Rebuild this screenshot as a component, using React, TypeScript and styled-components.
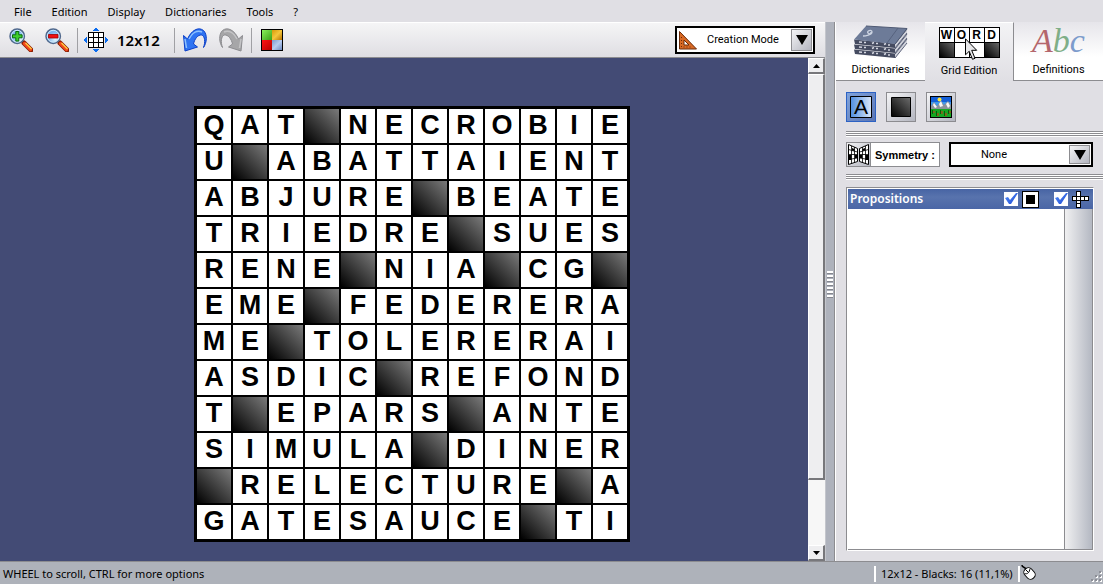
import React from 'react';
import styled, { createGlobalStyle, css } from 'styled-components';

const GlobalStyle = createGlobalStyle`
  * { box-sizing: border-box; }
  body { margin: 0; }
  button, select, input { font: inherit; color: inherit; margin: 0; }
`;

const uiFont = '"Noto Sans", "Open Sans", sans-serif';
const panelFont = 'Roboto, "Liberation Sans", sans-serif';

const Page = styled.div`
  display: flex;
  flex-direction: column;
  min-height: 100vh;
  background: #e0dfe4;
  color: #000;
  font: 12px/16px ${uiFont};
`;

const MenuBar = styled.nav`
  display: flex;
  height: 22px;
  padding: 3px 4px 0;
`;

const MenuItem = styled.button`
  padding: 0 10px;
  height: 18px;
  border: 0;
  background: none;
  font-size: 11px;
  line-height: 18px;
`;

const Body = styled.div`
  display: flex;
  flex: 1;
`;

const Workspace = styled.main`
  display: flex;
  flex: 1;
  flex-direction: column;
  min-width: 0;
`;

const Toolbar = styled.div`
  display: flex;
  align-items: center;
  height: 36px;
  padding: 0 10px 0 1px;
  border-top: 1px solid #fff;
  border-bottom: 1px solid #8c8c90;
  background: linear-gradient(#f5f5f6, #dfdee3);
`;

const ToolGroup = styled.div`
  display: flex;
  padding: 0 2px;
`;

const ToolButton = styled.button`
  display: flex;
  align-items: center;
  justify-content: center;
  width: 36px;
  height: 30px;
  padding: 0;
  border: 0;
  background: none;
`;

const ToolRule = styled.span`
  width: 1px;
  height: 25px;
  background: #a0a0a4;
`;

const SizeLabel = styled.span`
  width: 60px;
  padding-left: 3px;
  font-size: 15px;
  font-weight: 600;
`;

const Spacer = styled.span`
  flex: 1;
`;

const PickerBox = styled.div<{ $width: number; $height: number }>`
  display: grid;
  grid-template: 1fr / 1fr;
  width: ${(p) => p.$width}px;
  height: ${(p) => p.$height}px;
  border: 2px solid #000;
  background: #fff;
  > * { grid-area: 1 / 1; }
`;

const Picker = styled.select`
  appearance: none;
  min-width: 0;
  padding: 0 0 0 30px;
  border: 0;
  background: none;
  font: 11px/20px ${panelFont};
`;

const PickerIcon = styled.span`
  display: flex;
  align-self: center;
  justify-self: start;
  padding-left: 2px;
  pointer-events: none;
`;

const PickerArrow = styled.span`
  display: flex;
  align-items: center;
  justify-content: center;
  justify-self: end;
  width: 21px;
  margin: 1px;
  border: 1px solid #8c8c90;
  background: linear-gradient(135deg, #f4f4f6, #b4b6c0);
  pointer-events: none;
`;

const CanvasRow = styled.div`
  display: flex;
  flex: 1;
`;

const Canvas = styled.div`
  display: flex;
  flex: 1;
  justify-content: center;
  align-items: flex-start;
  padding: 48px 0 19px 16px;
  background: #434b75;
`;

const Crossword = styled.table`
  border: 1px solid #000;
  border-spacing: 2px;
  background: #000;
  font: 700 27px/30px "Liberation Sans", Arial, sans-serif;
`;

const Cell = styled.td<{ $black?: boolean }>`
  width: 34px;
  height: 34px;
  padding: 0 0 3px;
  background: #fff;
  text-align: center;
  ${(p) => p.$black && css`background: linear-gradient(45deg, #000, #7a7a7a);`}
`;

const ScrollBar = styled.div`
  display: flex;
  flex-direction: column;
  width: 17px;
  background: #f7f7f7;
`;

const raised = css`
  border: 1px solid #fff;
  border-right: 2px solid #77777b;
  border-bottom: 2px solid #77777b;
  background: #eeeef0;
`;

const ScrollArrow = styled.button`
  display: flex;
  align-items: center;
  justify-content: center;
  height: 16px;
  padding: 0;
  ${raised}
`;

const ScrollThumb = styled.div`
  flex: 406;
  ${raised}
`;

const ScrollTrough = styled.div`
  flex: 65;
`;

const Splitter = styled.div`
  display: flex;
  flex-direction: column;
  align-items: center;
  justify-content: center;
  gap: 2px;
  width: 10px;
  padding-bottom: 16px;
  border-right: 1px solid #8c8c90;
  border-left: 1px solid #c4c6cc;
  background: #aeb2bc;
`;

const SplitterNotch = styled.span`
  width: 6px;
  height: 2px;
  background: #fff;
  box-shadow: 0 1px #84868e;
`;

const SidePanel = styled.aside`
  display: flex;
  flex-direction: column;
  width: 268px;
  border-left: 1px solid #fff;
  font-family: ${panelFont};
`;

const Tabs = styled.div`
  display: grid;
  grid-template-columns: repeat(3, 1fr);
  height: 59px;
`;

const Tab = styled.button<{ $active?: boolean }>`
  display: grid;
  grid-template-rows: 38px 1fr;
  justify-items: center;
  align-items: center;
  padding: 0;
  border: 0;
  border-bottom: 1px solid #8c8c90;
  background: linear-gradient(#e6e5ea, #fff 60%);
  font-size: 11px;
  line-height: 18px;
  ${(p) => p.$active && css`
    border-top: 1px solid #fff;
    border-right: 1px solid #8c8c90;
    border-bottom: 0;
    background: linear-gradient(#f3f3f5, #e0dfe4);
  `}
`;

const WordTiles = styled.span`
  position: relative;
  display: grid;
  grid-template: repeat(2, 14px) / repeat(4, 14px);
  gap: 1px;
  padding: 1px;
  background: #000;
  font: 700 12px/14px "Liberation Sans", Arial, sans-serif;
`;

const Tile = styled.span<{ $black?: boolean }>`
  background: ${(p) => (p.$black ? 'linear-gradient(45deg, #000, #666)' : '#fff')};
  text-align: center;
`;

const Pointer = styled.svg`
  position: absolute;
  top: 11px;
  left: 26px;
`;

const AbcMark = styled.span`
  font: italic 34px/34px "Liberation Serif", serif;
  color: #b4666c;
`;

const AbcLetter = styled.span<{ $color: string }>`
  color: ${(p) => p.$color};
`;

const PanelContent = styled.div`
  display: flex;
  flex: 1;
  flex-direction: column;
  padding: 11px 0 10px 10px;
`;

const ModeRow = styled.div`
  display: flex;
  gap: 10px;
  margin-bottom: 9px;
`;

const ModeButton = styled.button<{ $on?: boolean }>`
  display: flex;
  align-items: center;
  justify-content: center;
  width: 30px;
  height: 30px;
  padding: 0;
  border: 1px solid ${(p) => (p.$on ? '#2c62c4' : '#8c8c90')};
  background: ${(p) => (p.$on ? 'linear-gradient(135deg, #7fa3dc, #5c76b4)' : 'linear-gradient(135deg, #f4f4f6, #b4b6c0)')};
`;

const Ridge = styled.div`
  height: 6px;
  background: repeating-linear-gradient(#8c8c90 0 1px, #fff 1px 2px);
`;

const SymmetryRow = styled.div`
  display: flex;
  justify-content: space-between;
  padding: 5px 10px 7px 0;
`;

const SymmetryLabel = styled.label`
  display: flex;
  align-items: center;
  width: 94px;
  height: 25px;
  border: 1px solid #8c8c90;
  background: #fff;
  font: 700 11px/20px "Liberation Sans", Arial, sans-serif;
`;

const SymmetryIcon = styled.span`
  display: flex;
  width: 24px;
  height: 23px;
  margin-right: 4px;
  border-right: 1px solid #8c8c90;
  background: linear-gradient(135deg, #f4f4f6, #b4b6c0);
`;

const ListBox = styled.section`
  display: flex;
  flex: 1;
  flex-direction: column;
  margin: 7px 9px 0 0;
  border: 1px solid #8c8c90;
  border-right-color: #fff;
  border-bottom-color: #fff;
  background: #fff;
  padding: 1px 0 0 1px;
`;

const ListHeader = styled.header`
  display: flex;
  align-items: center;
  height: 20px;
  padding: 0 4px 0 2px;
  background: linear-gradient(#4764a4, #5873ad 40%, #4a66a6);
  color: #fff;
  font: 600 12px/18px ${uiFont};
`;

const HeaderTitle = styled.h2`
  flex: 1;
  margin: 0;
  font: inherit;
`;

const Option = styled.label`
  display: flex;
  align-items: center;
  gap: 4px;
  margin-left: 15px;
`;

const Check = styled.input`
  appearance: none;
  width: 14px;
  height: 14px;
  background: #fff;
  &:checked::before {
    content: '';
    display: block;
    width: 14px;
    height: 14px;
    background: linear-gradient(135deg, #5c98ff, #1540cc);
    clip-path: polygon(1px 6px, 4px 5px, 6px 8px, 12px 1px, 14px 1px, 7px 12px, 5px 12px);
  }
`;

const ListArea = styled.div`
  display: flex;
  flex: 1;
`;

const ListItems = styled.div`
  flex: 1;
  border-right: 1px solid #8c8c90;
  border-bottom: 1px solid #8c8c90;
`;

const ListScroll = styled.div`
  width: 28px;
  border-right: 1px solid #8c8c90;
  border-bottom: 1px solid #8c8c90;
  background: linear-gradient(90deg, #f0f0f1, #b4b8c2);
`;

const StatusBar = styled.footer`
  display: flex;
  align-items: center;
  height: 23px;
  padding: 1px 0 0 3px;
  border-top: 1px solid #8c8c90;
  background: #aeb2ba;
  font-size: 11px;
`;

const StatusRule = styled.span`
  width: 2px;
  height: 16px;
  background: #fff;
`;

const StatusCount = styled.span`
  width: 142px;
  padding-left: 5px;
`;

const StatusIcons = styled.span`
  display: flex;
  justify-content: space-between;
  width: 83px;
  height: 19px;
  padding-left: 1px;
`;

const GripCorner = styled.span`
  display: flex;
  align-self: flex-end;
`;

const Magnifier = ({ minus }: { minus?: boolean }) => (
  <svg width="24" height="24" viewBox="0 0 24 24">
    <defs>
      <radialGradient id="lens" cx="65%" cy="70%"><stop offset="0" stopColor="#e8faff" /><stop offset="1" stopColor="#7cb4ec" /></radialGradient>
    </defs>
    <path d="M15 15l7 7" stroke="#8a1c00" strokeWidth="5" strokeLinecap="round" />
    <path d="M15.500 15.500l6 6" stroke="#f4481c" strokeWidth="3.200" strokeLinecap="round" />
    <path d="M16.500 15l6 6" stroke="#ffd040" strokeWidth="1.300" />
    <circle cx="8.200" cy="8.200" r="7.200" fill="url(#lens)" stroke="#50688c" strokeWidth="1.500" />
    <circle cx="8.200" cy="8.200" r="5.900" fill="none" stroke="#d4ecfb" strokeWidth=".9" />
    {minus
      ? <path d="M3.500 6.500h9.500v3.500H3.500z" fill="#ee1010" stroke="#a00000" strokeWidth=".8" />
      : <path d="M6.800 3.500h3v3.300h3.300v3H9.800v3.300h-3V9.800H3.500v-3h3.300z" fill="#3fd02c" stroke="#08690c" />}
  </svg>
);

const GridIcon = () => (
  <svg width="24" height="24" viewBox="0 0 24 24" shapeRendering="crispEdges">
    <path d="M12 0l4 3H8zM12 24l4-3H8zM0 12l3-4v8zM24 12l-3-4v8z" fill="#0a6cf0" />
    <path d="M4 4h16v16H4z" fill="#000" />
    <path d="M5 5h4v4H5zM10 5h4v4h-4zM15 5h4v4h-4zM5 10h4v4H5zM10 10h4v4h-4zM15 10h4v4h-4zM5 15h4v4H5zM10 15h4v4h-4zM15 15h4v4h-4z" fill="#fff" />
  </svg>
);

const CurvedArrow = ({ redo }: { redo?: boolean }) => (
  <svg width="26" height="26" viewBox="0 0 26 26">
    <g transform={redo ? 'translate(26 0) scale(-1 1)' : undefined}>
      <path d="M1.500 8.500L3 24l12.500-4-4-3c1-5 4.500-9.500 8-9 3.500 1 4 7 2 12.500 3.500-5 4-13 0-17C16.500-.5 9.500 3 5.500 12z"
        fill={redo ? '#a6a6a8' : '#2f74f2'} stroke={redo ? '#8c8c90' : '#0b3fc8'} strokeLinejoin="round" />
      <path d="M3 12l1.500 9M7 12c3-6 8-9 13-7" fill="none" stroke={redo ? '#c4c4c6' : '#8fc2ff'} strokeWidth="1.500" />
    </g>
  </svg>
);

const ColoursIcon = () => (
  <svg width="22" height="22" viewBox="0 0 22 22">
    <defs>
      <linearGradient id="cg" x2="1" y2="1"><stop stopColor="#8af05a" /><stop offset="1" stopColor="#3aa018" /></linearGradient>
      <linearGradient id="cy" x2="1" y2="1"><stop stopColor="#d89a08" /><stop offset=".5" stopColor="#f4c63c" /><stop offset="1" stopColor="#b87400" /></linearGradient>
      <linearGradient id="cr" x2="1" y2="1"><stop stopColor="#ff1414" /><stop offset="1" stopColor="#b80000" /></linearGradient>
      <linearGradient id="cb" x2="1" y2="1"><stop stopColor="#7c98d0" /><stop offset=".5" stopColor="#b8ccf0" /><stop offset="1" stopColor="#6c88c0" /></linearGradient>
    </defs>
    <path d="M0 0h22v22H0z" />
    <path d="M1 1h10v10H1z" fill="url(#cg)" /><path d="M11 1h10v10H11z" fill="url(#cy)" />
    <path d="M1 11h10v10H1z" fill="url(#cr)" /><path d="M11 11h10v10H11z" fill="url(#cb)" />
  </svg>
);

const SetSquare = () => (
  <svg width="18" height="19" viewBox="0 0 18 19">
    <path d="M.5.5v17.500H17.500zM5 9l5 5H5z" fill="#d96a24" stroke="#6b2a08" fillRule="evenodd" />
    <path d="M2.500 6v10h10" fill="none" stroke="#6b2a08" strokeDasharray="1 2" />
  </svg>
);

const PickerTriangle = () => (
  <svg width="12" height="12" viewBox="0 0 12 12"><path d="M0 1h12L6 11z" /></svg>
);

const ScrollTriangle = ({ up }: { up?: boolean }) => (
  <svg width="7" height="4" viewBox="0 0 7 4"><path d={up ? 'M3.500 0L7 4H0z' : 'M0 0h7L3.500 4z'} /></svg>
);

const Books = () => (
  <svg width="56" height="34" viewBox="0 0 56 34">
    {[10, 5, 0].map((y) => (
      <g key={y} transform={`translate(0 ${y})`}>
        <path d="M1 15.500l41 4v4.500L2 20z" fill="#454b60" />
        <path d="M42 19.500L54 5v3.500L42 24z" fill="#d0d2da" />
        <path d="M42 20L54 5M42 24L54 9" stroke="#5a6178" />
        <path d="M6 18l3 .3M11 18.500h2M19 19.500l2-1M23 19.500h2M31 20.500l2-1M35 21h2" stroke="#d4d6e0" strokeWidth="1.500" />
      </g>
    ))}
    <path d="M13 2l41 2.500L42 20 1 15.500z" fill="#6d7b98" />
    <path d="M13 2l41 2.500M42 20L54 4.500" stroke="#4f5a74" />
    <path d="M45 4L34 19" stroke="#56627e" />
    <path d="M10 12c2 0 9-1 9-4s-6-1-4 1 3 0 3-1" fill="none" stroke="#ccd4e2" strokeWidth="1.300" />
  </svg>
);

const LetterMode = () => (
  <svg width="22" height="22" viewBox="0 0 22 22">
    <defs><linearGradient id="lm" x2="1" y2="0"><stop stopColor="#4f8ee0" /><stop offset="1" stopColor="#dbe8fa" /></linearGradient></defs>
    <path d="M.5.500h21v21H.500z" fill="url(#lm)" stroke="#000" />
    <text x="11" y="18" textAnchor="middle" fontFamily="Liberation Sans, Arial, sans-serif" fontSize="21">A</text>
  </svg>
);

const BlackMode = () => (
  <svg width="20" height="20" viewBox="0 0 20 20">
    <defs><linearGradient id="bm" x1="0" y1="1" x2="1" y2="0"><stop stopColor="#000" /><stop offset="1" stopColor="#6c6c6c" /></linearGradient></defs>
    <path d="M.5.500h19v19H.500z" fill="url(#bm)" stroke="#000" />
  </svg>
);

const PictureMode = () => (
  <svg width="22" height="22" viewBox="0 0 22 22">
    <path d="M0 0h22v22H0z" />
    <path d="M1 1h20v12H1z" fill="#1560d8" />
    <path d="M1 6h20v7H1z" fill="#3f98ee" />
    <circle cx="9.500" cy="3.500" r="2" fill="#ffe53b" />
    <path d="M1 10l3-4 3 4 4-5 3 4 4-4 3 4v6H1z" fill="#8c929c" />
    <path d="M3 9l1-2 3 4-2 1zM9 8l2-3 2 5-3 1zM16 8l2-2 2 4-2 2z" fill="#f8f8f8" />
    <path d="M1 13h20v8H1z" fill="#16a822" />
    <path d="M2.500 14v4M6.500 15v5M10.500 14v4M14.500 15v5M18.500 14v4" stroke="#075c0c" />
    <path d="M4 15v2M8 17v3M12 15v3M16 17v3M20 15v2" stroke="#e02a18" />
  </svg>
);

const MirrorIcon = () => (
  <svg width="23" height="23" viewBox="0 0 23 23">
    {[false, true].map((flip) => (
      <g key={String(flip)} transform={flip ? 'translate(23 0) scale(-1 1)' : undefined}>
        <path d="M1.500 1.500l9 4v13l-9 3z" fill="#fff" stroke="#000" />
        <path d="M4.500 3v17.500M7.500 4v16M1.500 6.500l9 2.500M1.500 11.500h9M1.500 16.500l9-1.500" stroke="#000" strokeWidth=".8" />
        <path d="M2 12h2.500v5H2zM5 5l2.500 1v2L5 7.500zM8 12h2.500v3H8z" />
      </g>
    ))}
  </svg>
);

const BlackSquare = () => (
  <svg width="17" height="17" viewBox="0 0 17 17" shapeRendering="crispEdges">
    <path d="M0 0h17v17H0z" /><path d="M1 1h15v15H1z" fill="#fff" /><path d="M4 4h9v9H4z" />
  </svg>
);

const CrossSlots = () => (
  <svg width="17" height="17" viewBox="0 0 17 17" shapeRendering="crispEdges">
    <path d="M4 0h5v17H4zM0 5h17v5H0z" />
    <path d="M5 1h3v4H5zM5 6h3v3H5zM5 10h3v2H5zM5 13h3v3H5zM1 6h3v3H1zM9 6h3v3H9zM13 6h3v3h-3z" fill="#fff" />
  </svg>
);

const MouseIcon = () => (
  <svg width="17" height="17" viewBox="0 0 17 17">
    <path d="M1 1c0 3 2 1 4 4" fill="none" stroke="#000" strokeWidth="1.500" />
    <rect x="4" y="3.500" width="9" height="12" rx="4" transform="rotate(-42 8.500 9.500)" fill="#fff" stroke="#000" />
    <path d="M3.500 9.500c3 1 5-1 5.500-5M4.500 5.500l2.500 2.500" fill="none" stroke="#000" />
  </svg>
);

const Grip = () => (
  <svg width="12" height="12" viewBox="0 0 12 12" shapeRendering="crispEdges">
    <path d="M9 1h2v2H9zM5 5h2v2H5zM9 5h2v2H9zM1 9h2v2H1zM5 9h2v2H5zM9 9h2v2H9z" fill="#fff" />
    <path d="M8 0h2v2H8zM4 4h2v2H4zM8 4h2v2H8zM0 8h2v2H0zM4 8h2v2H4zM8 8h2v2H8z" fill="#8c8e96" />
  </svg>
);

const menus = ['File', 'Edition', 'Display', 'Dictionaries', 'Tools', '?'];

const rows = [
  'QAT#NECROBIE',
  'U#ABATTAIENT',
  'ABJURE#BEATE',
  'TRIEDRE#SUES',
  'RENE#NIA#CG#',
  'EME#FEDERERA',
  'ME#TOLERERAI',
  'ASDIC#REFOND',
  'T#EPARS#ANTE',
  'SIMULA#DINER',
  '#RELECTURE#A',
  'GATESAUCE#TI',
];

export default function App() {
  return (
    <Page>
      <GlobalStyle />
      <MenuBar>
        {menus.map((name) => <MenuItem key={name}>{name}</MenuItem>)}
      </MenuBar>
      <Body>
        <Workspace>
          <Toolbar>
            <ToolGroup>
              <ToolButton aria-label="Zoom in"><Magnifier /></ToolButton>
              <ToolButton aria-label="Zoom out"><Magnifier minus /></ToolButton>
            </ToolGroup>
            <ToolRule />
            <ToolButton aria-label="Grid size"><GridIcon /></ToolButton>
            <SizeLabel>12x12</SizeLabel>
            <ToolRule />
            <ToolGroup>
              <ToolButton aria-label="Undo"><CurvedArrow /></ToolButton>
              <ToolButton aria-label="Redo"><CurvedArrow redo /></ToolButton>
            </ToolGroup>
            <ToolRule />
            <ToolGroup>
              <ToolButton aria-label="Colours"><ColoursIcon /></ToolButton>
            </ToolGroup>
            <Spacer />
            <PickerBox $width={140} $height={28}>
              <Picker aria-label="Mode"><option>Creation Mode</option></Picker>
              <PickerIcon><SetSquare /></PickerIcon>
              <PickerArrow><PickerTriangle /></PickerArrow>
            </PickerBox>
          </Toolbar>
          <CanvasRow>
            <Canvas>
              <Crossword>
                <tbody>
                  {rows.map((row) => (
                    <tr key={row}>
                      {[...row].map((ch, i) => (ch === '#' ? <Cell key={i} $black /> : <Cell key={i}>{ch}</Cell>))}
                    </tr>
                  ))}
                </tbody>
              </Crossword>
            </Canvas>
            <ScrollBar>
              <ScrollArrow aria-label="Scroll up"><ScrollTriangle up /></ScrollArrow>
              <ScrollThumb />
              <ScrollTrough />
              <ScrollArrow aria-label="Scroll down"><ScrollTriangle /></ScrollArrow>
            </ScrollBar>
          </CanvasRow>
        </Workspace>
        <Splitter>
          {[0, 1, 2, 3, 4, 5, 6].map((n) => <SplitterNotch key={n} />)}
        </Splitter>
        <SidePanel>
          <Tabs>
            <Tab><Books />Dictionaries</Tab>
            <Tab $active>
              <WordTiles>
                {[...'WORD'].map((ch) => <Tile key={ch}>{ch}</Tile>)}
                <Tile $black /><Tile /><Tile /><Tile $black />
                <Pointer width="13" height="23" viewBox="0 0 13 23">
                  <path d="M.5.800v16l3.700-3.500 3.300 8 2.500-1-3.300-8h5z" fill="#e8e8ea" stroke="#000" />
                </Pointer>
              </WordTiles>
              Grid Edition
            </Tab>
            <Tab>
              <AbcMark>A<AbcLetter $color="#7fae88">b</AbcLetter><AbcLetter $color="#7d9ccc">c</AbcLetter></AbcMark>
              Definitions
            </Tab>
          </Tabs>
          <PanelContent>
            <ModeRow>
              <ModeButton $on aria-label="Letters"><LetterMode /></ModeButton>
              <ModeButton aria-label="Black squares"><BlackMode /></ModeButton>
              <ModeButton aria-label="Pictures"><PictureMode /></ModeButton>
            </ModeRow>
            <Ridge />
            <SymmetryRow>
              <SymmetryLabel htmlFor="symmetry"><SymmetryIcon><MirrorIcon /></SymmetryIcon>Symmetry :</SymmetryLabel>
              <PickerBox $width={144} $height={25}>
                <Picker id="symmetry"><option>None</option></Picker>
                <PickerArrow><PickerTriangle /></PickerArrow>
              </PickerBox>
            </SymmetryRow>
            <Ridge />
            <ListBox>
              <ListHeader>
                <HeaderTitle>Propositions</HeaderTitle>
                <Option><Check type="checkbox" defaultChecked aria-label="Black squares" /><BlackSquare /></Option>
                <Option><Check type="checkbox" defaultChecked aria-label="Crossing words" /><CrossSlots /></Option>
              </ListHeader>
              <ListArea><ListItems /><ListScroll /></ListArea>
            </ListBox>
          </PanelContent>
        </SidePanel>
      </Body>
      <StatusBar>
        WHEEL to scroll, CTRL for more options
        <Spacer />
        <StatusRule />
        <StatusCount>12x12 - Blacks: 16 (11,1%)</StatusCount>
        <StatusRule />
        <StatusIcons><MouseIcon /><GripCorner><Grip /></GripCorner></StatusIcons>
      </StatusBar>
    </Page>
  );
}
